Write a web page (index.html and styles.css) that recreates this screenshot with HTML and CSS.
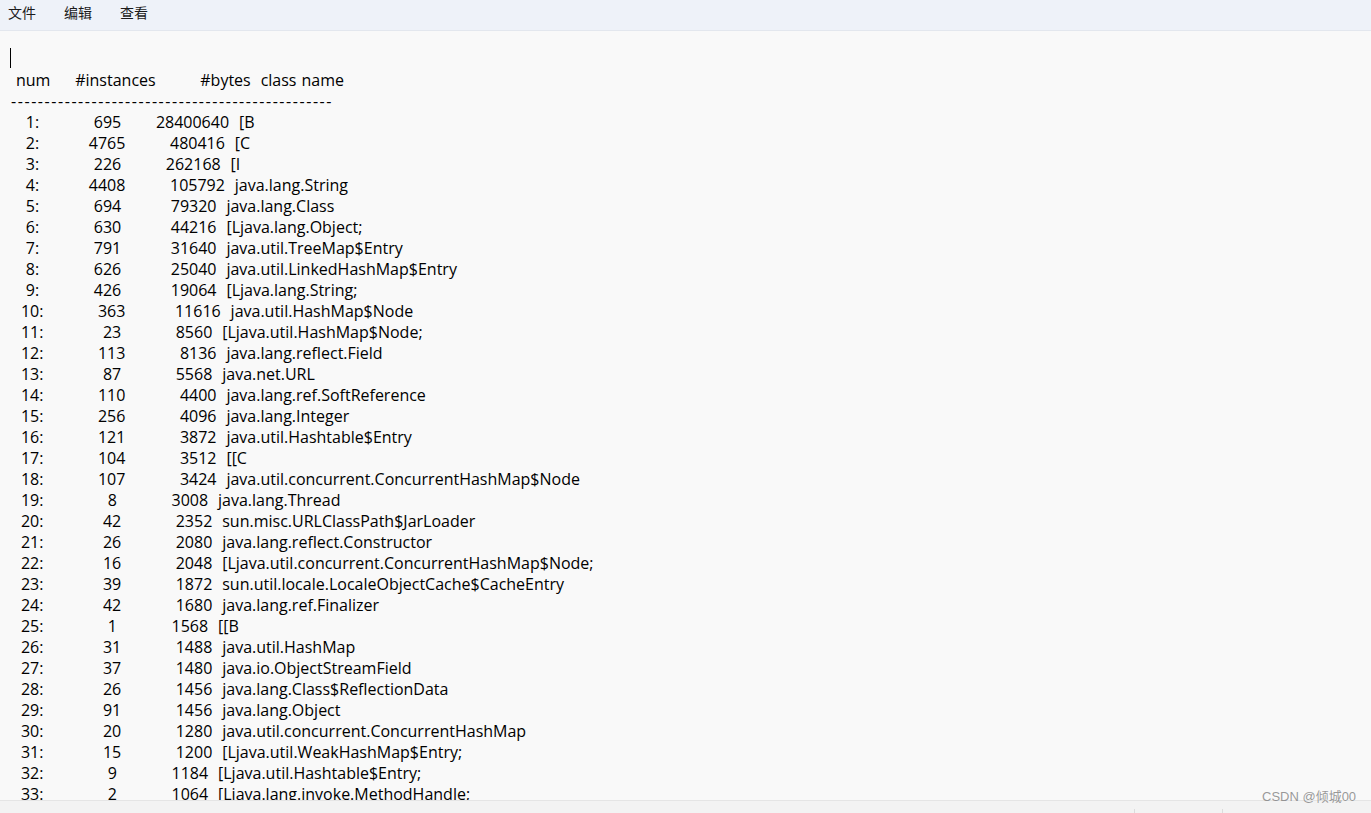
FILE: index.html
```html
<!DOCTYPE html>
<html lang="zh-CN">
<head>
<meta charset="utf-8">
<title>无标题 - 记事本</title>
<link rel="stylesheet" href="styles.css">
</head>
<body>
<div class="app">
  <nav class="menubar">
    <span class="menu-item">文件</span>
    <span class="menu-item">编辑</span>
    <span class="menu-item">查看</span>
  </nav>
  <main class="editor">
<pre class="text"><span class="line"><span class="caret"></span></span>
<span class="line"> num     #instances         #bytes  class name</span>
<span class="line dashes">------------------------------------------------</span>
<span class="line">   1:           695       28400640  [B</span>
<span class="line">   2:          4765         480416  [C</span>
<span class="line">   3:           226         262168  [I</span>
<span class="line">   4:          4408         105792  java.lang.String</span>
<span class="line">   5:           694          79320  java.lang.Class</span>
<span class="line">   6:           630          44216  [Ljava.lang.Object;</span>
<span class="line">   7:           791          31640  java.util.TreeMap$Entry</span>
<span class="line">   8:           626          25040  java.util.LinkedHashMap$Entry</span>
<span class="line">   9:           426          19064  [Ljava.lang.String;</span>
<span class="line">  10:           363          11616  java.util.HashMap$Node</span>
<span class="line">  11:            23           8560  [Ljava.util.HashMap$Node;</span>
<span class="line">  12:           113           8136  java.lang.reflect.Field</span>
<span class="line">  13:            87           5568  java.net.URL</span>
<span class="line">  14:           110           4400  java.lang.ref.SoftReference</span>
<span class="line">  15:           256           4096  java.lang.Integer</span>
<span class="line">  16:           121           3872  java.util.Hashtable$Entry</span>
<span class="line">  17:           104           3512  [[C</span>
<span class="line">  18:           107           3424  java.util.concurrent.ConcurrentHashMap$Node</span>
<span class="line">  19:             8           3008  java.lang.Thread</span>
<span class="line">  20:            42           2352  sun.misc.URLClassPath$JarLoader</span>
<span class="line">  21:            26           2080  java.lang.reflect.Constructor</span>
<span class="line">  22:            16           2048  [Ljava.util.concurrent.ConcurrentHashMap$Node;</span>
<span class="line">  23:            39           1872  sun.util.locale.LocaleObjectCache$CacheEntry</span>
<span class="line">  24:            42           1680  java.lang.ref.Finalizer</span>
<span class="line">  25:             1           1568  [[B</span>
<span class="line">  26:            31           1488  java.util.HashMap</span>
<span class="line">  27:            37           1480  java.io.ObjectStreamField</span>
<span class="line">  28:            26           1456  java.lang.Class$ReflectionData</span>
<span class="line">  29:            91           1456  java.lang.Object</span>
<span class="line">  30:            20           1280  java.util.concurrent.ConcurrentHashMap</span>
<span class="line">  31:            15           1200  [Ljava.util.WeakHashMap$Entry;</span>
<span class="line">  32:             9           1184  [Ljava.util.Hashtable$Entry;</span>
<span class="line">  33:             2           1064  [Ljava.lang.invoke.MethodHandle;</span></pre>
  </main>
  <footer class="statusbar">
    <span class="status-cell status-main">行 1，列 1</span>
    <span class="status-cell status-zoom">100%</span>
    <span class="status-cell status-eol">Windows (CRLF)</span>
  </footer>
</div>
<div class="watermark">CSDN @倾城00</div>
</body>
</html>
```
FILE: styles.css
```css
html, body {
  margin: 0;
  padding: 0;
  height: 100%;
  overflow: hidden;
}

body {
  background: #f9f9f9;
  font-family: "Noto Sans CJK SC", "Noto Sans", sans-serif;
  position: relative;
}

.app {
  display: flex;
  flex-direction: column;
  height: 836px;
}

.menubar {
  flex: 0 0 auto;
  height: 31px;
  box-sizing: border-box;
  display: flex;
  gap: 28px;
  padding: 2px 0 0 8px;
  background: #eef2f9;
  border-bottom: 1px solid #e3e7ee;
}

.menu-item {
  font-size: 14px;
  line-height: 20px;
  color: #1b1b1b;
}

.editor {
  flex: 1 1 auto;
  overflow: hidden;
  background: #f9f9f9;
  padding: 18px 0 0 11px;
}

.text {
  margin: 0;
  font-family: "Open Sans", "Noto Sans", sans-serif;
  font-size: 16px;
  line-height: 21px;
  word-spacing: 0.8px;
  color: #000;
  white-space: pre;
}

.line {
  display: inline;
}

.dashes {
  letter-spacing: 1.56px;
}

.caret {
  display: inline-block;
  width: 1px;
  height: 20px;
  margin-left: -1px;
  margin-top: -1px;
  vertical-align: top;
  background: #000;
}

.statusbar {
  flex: 0 0 36px;
  display: flex;
  background: #f3f3f3;
  border-top: 1px solid #e5e5e5;
  box-sizing: border-box;
  padding-top: 8px;
}

.status-cell {
  font-size: 12px;
  line-height: 24px;
  color: #444;
  padding-top: 2px;
}

.status-main {
  flex: 1 1 auto;
  padding-left: 18px;
}

.status-zoom {
  flex: 0 0 88px;
  border-left: 1px solid #dcdcdc;
  box-sizing: border-box;
  padding-left: 12px;
}

.status-eol {
  flex: 0 0 149px;
  border-left: 1px solid #dcdcdc;
  box-sizing: border-box;
  padding-left: 12px;
}

.watermark {
  position: absolute;
  left: 1262px;
  top: 788px;
  font-family: "Liberation Sans", "Noto Sans CJK SC", sans-serif;
  font-size: 13px;
  line-height: 18px;
  color: rgba(120, 120, 120, 0.75);
  white-space: nowrap;
}
```
